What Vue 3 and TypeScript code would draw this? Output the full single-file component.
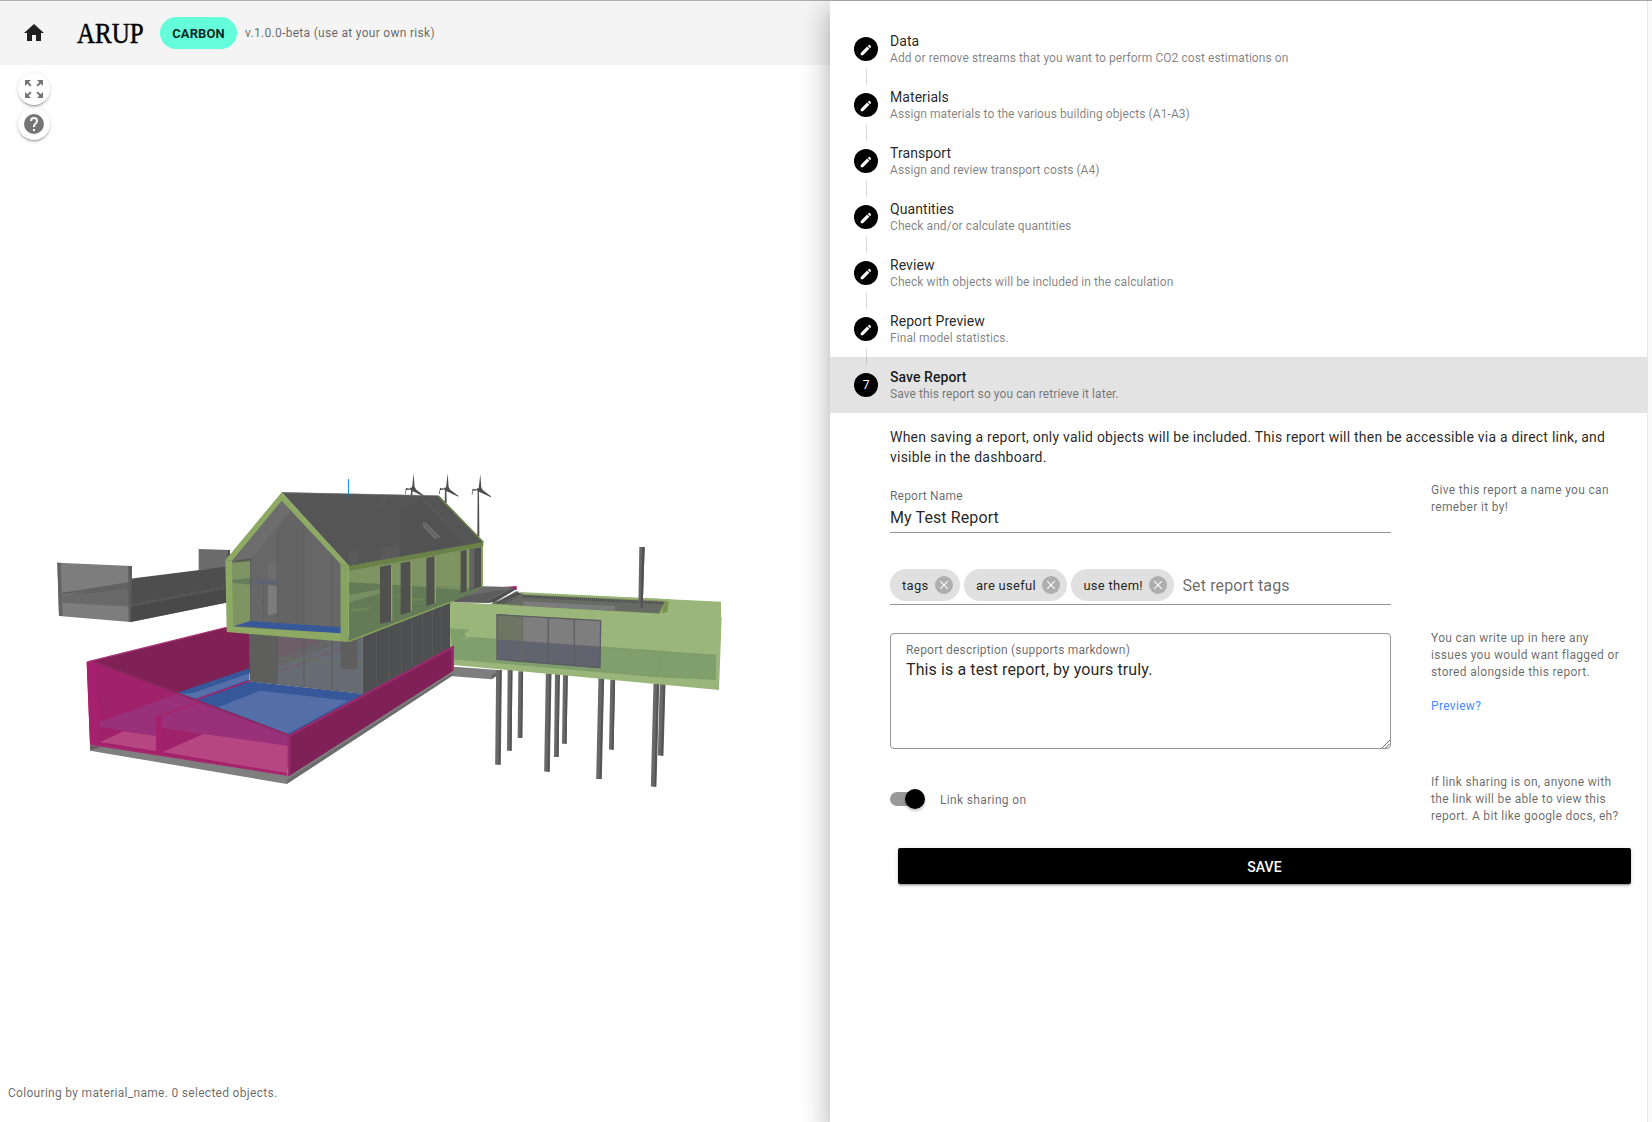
<script setup lang="ts">
import { ref } from 'vue'

interface Step {
  title: string
  hint: string
}

const steps: Step[] = [
  { title: 'Data', hint: 'Add or remove streams that you want to perform CO2 cost estimations on' },
  { title: 'Materials', hint: 'Assign materials to the various building objects (A1-A3)' },
  { title: 'Transport', hint: 'Assign and review transport costs (A4)' },
  { title: 'Quantities', hint: 'Check and/or calculate quantities' },
  { title: 'Review', hint: 'Check with objects will be included in the calculation' },
  { title: 'Report Preview', hint: 'Final model statistics.' },
  { title: 'Save Report', hint: 'Save this report so you can retrieve it later.' },
]
const current = 6

const tags = ref<string[]>(['tags', 'are useful', 'use them!'])
const reportName = ref('My Test Report')
const description = ref('This is a test report, by yours truly.')

const removeTag = (tag: string) => {
  tags.value = tags.value.filter((t) => t !== tag)
}

// Supporting columns below the wing: top x, top y, bottom x, bottom y
const columns: number[][] = [
  [242, 424, 240, 624], [210, 420, 208, 662], [177, 420, 174, 704],
  [376, 434, 373, 641], [352, 430, 349, 681], [326, 430, 321, 725],
  [518, 448, 514, 659], [484, 444, 477, 747],
  [668, 460, 662, 677], [649, 460, 641, 770],
]
const turbines: number[][] = [[611, 88], [713, 88], [811, 90]]
</script>

<template>
  <div class="app">
    <section class="viewer">
      <header class="bar">
        <svg class="home" viewBox="0 0 24 24"><path d="M10 20v-6h4v6h5v-8h3L12 3 2 12h3v8z" /></svg>
        <span class="logo"><span class="wordmark">ARUP</span></span>
        <span class="badge">CARBON</span>
        <span class="version">v.1.0.0-beta (use at your own risk)</span>
      </header>

      <div class="stage">
        <svg class="model" viewBox="0 65 830 1057">
          <!-- footbridge -->
          <g transform="translate(40 460) scale(.33333)">
            <path fill="#6b6b6b" d="M476 267 570 270V325L476 330z" />
            <path fill="#4f4f4f" d="M563 270h7v55h-7z" />
            <path fill="#7d7d7d" d="M52 308 276 318 272 486 57 468z" />
            <path fill="#626262" d="M66 398 272 366V386L66 411z" />
            <path fill="#696969" d="M66 411 272 386V440L68 428z" />
            <path fill="#7d7d7d" d="M66 404 140 396 66 409z" />
            <path fill="#636363" d="M52 308h10l6 160H57z" />
            <path fill="#4e4e4e" d="M270 356 580 317V424L272 486z" />
            <path fill="#474747" d="M272 442 580 378V424L272 486z" opacity=".7" />
            <path fill="none" stroke="#727272" stroke-width="8" stroke-dasharray="3 4" d="M140 433 272 436 556 384" opacity=".55" />
            <path fill="#5c5c5c" d="M265 318h11l-3 168h-7z" />
          </g>

          <!-- basement walls and pools, left part -->
          <g transform="translate(40 460) scale(.33333)">
            <path fill="#7f7f7f" d="M150 840 756 930 740 972 150 872z" />
            <path fill="#7f2155" d="M140 606 560 502H650V632L420 712z" />
            <path fill="none" stroke="#a83575" stroke-width="4" d="M142 606 560 502" />
            <path fill="#36589a" d="M400 702 628 625V675L480 740z" />
            <path fill="#5570a8" d="M420 702 460 698 628 640V658L470 716z" />
            <path fill="#36589a" d="M470 725 632 664 976 702V714L748 834z" />
            <path fill="#546fa8" d="M535 742 660 692 925 722 743 822z" />
            <path fill="none" stroke="#a0226a" stroke-width="5" d="M465 720 630 662" />
            <path fill="#a0226a" d="M140 606 170 607 743 822 750 830V948L150 852z" />
            <path fill="#98307a" d="M178 786 415 700 743 822V857L480 822 365 803 350 828 178 800z" />
            <path fill="#b54682" d="M180 846 252 814 350 828V874zM368 876 490 822 743 857V940z" />
            <path fill="none" stroke="#a6266d" stroke-width="6" d="M355 770 480 724" />
            <path fill="#a6216d" d="M347 770 365 762V882H348zM140 606h30l10 240-30 6z" />
            <path fill="none" stroke="#a9256f" stroke-width="6" d="M152 852 748 945" />
            <path fill="none" stroke="#8b2861" stroke-width="5" d="M165 607 743 824" />
            <path fill="#6b5c65" d="M150 855 184 861 150 871z" />
          </g>

          <!-- wing -->
          <g transform="translate(440 530) scale(.33333)">
            <path fill="#7d7d7d" d="M0 420 42 410 185 421 155 448 30 438 0 456z" />
            <path fill="#666" d="M155 434 182 424V430L155 448z" />
            <g v-for="(c, i) in columns" :key="i">
              <path :d="`M${c[0]} ${c[1]}L${c[2]} ${c[3]}`" stroke="#686868" :stroke-width="i % 3 === 2 || i > 6 ? 17 : 14" />
              <path :d="`M${c[0] + 5} ${c[1]}L${c[2] + 4} ${c[3]}`" stroke="#535353" stroke-width="5" />
            </g>
            <path fill="#80965f" d="M140 228 236 188 690 208 664 258z" />
            <path fill="#9bb67a" d="M240 186 843 215V262H845L837 480 0 401V214L660 251 680 212 245 192z" />
            <path fill="#686a64" d="M150 220 246 194 674 216 656 250z" />
            <path fill="#7c7c7c" d="M250 214 525 228V242L250 227z" />
            <path fill="none" stroke="#515151" stroke-width="8" stroke-dasharray="4 2" d="M246 199 672 219" />
            <path fill="#7b9250" d="M674 214 686 212 682 246 666 250z" />
            <path fill="#7f9f6c" d="M30 295 90 299 72 312 82 320 60 330 88 322 827 376 826 448 648 440 40 386z" />
            <path fill="none" stroke="#789565" stroke-width="2" d="M88 322 827 376 826 448 648 440 668 374M648 440 40 387" />
            <path fill="#7e7e7e" d="M171 253 482 271 480 414 171 388z" />
            <path fill="#6e7563" d="M171 253 248 258V333L171 328z" />
            <path fill="#61636f" d="M171 328 482 350 480 414 171 388z" />
            <path fill="none" stroke="#5c5d61" stroke-width="4" d="M171 254 482 272 480 413 171 388zM325 264V400M403 268V406" />
            <path fill="none" stroke="#666961" stroke-width="3" d="M248 258V393" />
            <path fill="#6b6b6b" d="M42 200 130 169 225 171 150 219 42 216z" />
            <path fill="#555" d="M42 205 180 180 200 184 148 219 42 216z" opacity=".65" />
            <path fill="#505050" d="M148 211 213 174 230 177 160 219zM165 220 228 184 248 193 190 222z" />
            <path fill="none" stroke="#777" stroke-width="2" d="M148 209 222 172M165 217 235 184M180 220 247 193" />
            <path fill="#9a2465" d="M190 171 230 168V181L208 171z" />
            <path fill="#666" d="M598 51h16l-6 183H595z" />
            <path fill="#505050" d="M607 51h7l-6 183h-6z" />
          </g>

          <!-- main house -->
          <g transform="translate(210 460) scale(.33333)">
            <g v-for="(t, i) in turbines" :key="i" fill="#4e4e4e">
              <path :d="`M${t[0] - 8} ${t[1]}h4l1 ${i === 2 ? 140 : 40}h-6z`" />
              <path :d="`M${t[0]} ${t[1] - 48}l3 44-3 8-5-8zM${t[0]} ${t[1] - 5}l32 24v3l-36-17zM${t[0]} ${t[1]}l-22 2-2 13-2-2 3-17z`" />
              <path :d="`M${t[0] - 12} ${t[1] - 4}l14-4 5 7-12 8z`" />
            </g>
            <path fill="#666669" d="M118 515 458 530V702L120 664z" />
            <path fill="#5e5e5d" d="M118 520H202V672L120 664z" />
            <path fill="#735768" d="M202 530 335 540 202 596z" opacity=".55" />
            <path fill="#686d78" d="M202 620 392 545 458 540V700L202 668z" opacity=".7" />
            <path fill="none" stroke="#765966" stroke-width="3" d="M202 635 420 555" />
            <path fill="none" stroke="#647e53" stroke-width="2" d="M202 595 458 612" />
            <path fill="#5e5e5e" d="M392 545 443 540V624Q415 632 392 622z" />
            <path fill="none" stroke="#5b5b5c" stroke-width="3" d="M202 525V670M282 530V680M367 540V690" />
            <path fill="#4d4f50" d="M458 530 720 425V572L458 708z" />
            <path fill="none" stroke="#626462" stroke-width="2" d="M499 515V678M537 498V658M574 483V638M606 470V620M637 456V602M667 444V588M694 436V572" />
            <path fill="#7f7f7f" d="M232 925 730 605V645L230 972z" />
            <path fill="#6d6d6d" d="M232 958 730 638V645L230 972z" />
            <path fill="#7f2156" d="M236 825 730 560V632L236 949z" />
            <path fill="none" stroke="#992a6b" stroke-width="7" d="M238 948V827L728 562V630" />

            <path fill="#7e9462" d="M416 328 818 256V382L728 425 416 546z" />
            <path fill="#637b57" d="M416 367 520 372 602 378 818 382 728 425 416 546z" />
            <path fill="#789061" d="M416 405 510 388V400L416 428zM605 376 750 382 752 390 605 378z" />
            <path fill="#6f8754" d="M418 448 488 441 470 452 420 455zM548 404 650 420 600 424z" />
            <path fill="#50514e" d="M510 320 543 314V485L510 491zM572 309 602 304V456L572 465zM649 294 674 289V430L649 438zM752 273 770 270V393L752 400zM779 268 813 262V380L779 390z" />
            <path fill="#646466" d="M779 270 793 267V383L779 388z" />
            <path fill="none" stroke="#89a55a" stroke-width="4" d="M545 314V482M604 304V454M676 290V428M773 270V390M817 256V380M416 544 728 424" />
            <path fill="#6a8147" d="M416 316 820 244V259L416 333z" />
            <path fill="#555" d="M215 97 685 107 820 246 416 317z" />
            <path fill="#50504f" d="M570 150 635 120 760 250 570 288z" opacity=".5" />
            <path fill="#606060" d="M513 261 567 256V288L513 297zM416 276 445 272V310L416 314z" opacity=".5" />
            <path fill="none" stroke="#66655f" stroke-width="2" d="M495 151 530 114 510 113M635 118 760 238" />
            <path fill="#6f6f6f" d="M638 186 648 188 692 232 675 238 640 200z" />
            <path fill="none" stroke="#515151" stroke-width="3" d="M642 190 684 235" />
            <path fill="none" stroke="#6a7d49" stroke-width="5" d="M685 108 819 246" />
            <path fill="none" stroke="#707070" stroke-width="2" d="M215 98 685 107" />

            <path fill="#676768" d="M215 110 60 300 62 508 400 528V312z" />
            <path fill="#7e9463" d="M66 308 120 304V486L68 500z" />
            <path fill="#647e5c" d="M66 360 120 354V374L66 368z" />
            <path fill="#6d6d6d" d="M215 122 242 154 125 295 68 305z" />
            <path fill="#565a4c" d="M75 302 125 295V300L75 307z" />
            <path fill="#646464" d="M202 205 240 155 280 195V490H202z" />
            <path fill="#5e6574" d="M122 356 214 360V376L122 370z" opacity=".8" />
            <path fill="#7c7c7c" d="M174 375 201 377V460L174 466z" />
            <path fill="#717171" d="M174 306H202V358H174z" opacity=".6" />
            <path fill="none" stroke="#5a5c59" stroke-width="2" d="M122 296V486M202 210V490M282 195V496M367 285V500M161 360V480M157 420V432" />
            <path fill="#37599a" d="M74 497 122 483 394 502V522z" />
            <path fill="#8da963" fill-rule="evenodd" d="M215 97 416 316 415 546 50 516 46 300zM215 122 66 303 70 500 392 520V312z" />
            <path fill="#86a35f" d="M392 312 416 316 415 546 393 543z" />
            <path fill="none" stroke="#799653" stroke-width="2" d="M66 303 48 300M392 312 416 317" />
            <path stroke="#1495ee" stroke-width="3" d="M415.5 57V102" />
            <path stroke="#32658a" stroke-width="2" d="M415.5 102V118" />
          </g>
        </svg>

        <div class="tools">
          <button class="tool">
            <svg viewBox="0 0 24 24"><path d="M15 3l2.3 2.3-2.89 2.87 1.42 1.42L18.7 6.7 21 9V3zM3 9l2.3-2.3 2.87 2.89 1.42-1.42L6.7 5.3 9 3H3zm6 12-2.3-2.3 2.89-2.87-1.42-1.42L5.3 17.3 3 15v6zm12-6-2.3 2.3-2.87-2.89-1.42 1.42 2.89 2.87L15 21h6z" /></svg>
          </button>
          <button class="tool">
            <svg viewBox="0 0 24 24"><path d="M15.07 11.25l-.9.92C13.45 12.89 13 13.5 13 15h-2v-.5c0-1.11.45-2.11 1.17-2.83l1.24-1.26c.37-.36.59-.86.59-1.41a2 2 0 0 0-4 0H8a4 4 0 0 1 8 0c0 .88-.36 1.67-.93 2.25M13 19h-2v-2h2M12 2a10 10 0 1 0 0 20 10 10 0 0 0 0-20z" /></svg>
          </button>
        </div>
        <p class="status">Colouring by material_name. 0 selected objects.</p>
      </div>
    </section>

    <main class="panel">
      <ol class="steps">
        <li v-for="(step, i) in steps" :key="step.title" class="step" :class="{ active: i === current }">
          <span class="dot">
            <template v-if="i === current">{{ i + 1 }}</template>
            <svg v-else viewBox="0 0 24 24"><path d="M20.71 7.04c.39-.39.39-1.04 0-1.41l-2.34-2.34c-.37-.39-1.02-.39-1.41 0l-1.84 1.83 3.75 3.75M3 17.25V21h3.75L17.81 9.93l-3.75-3.75z" /></svg>
          </span>
          <span class="label">
            <span class="title">{{ step.title }}</span>
            <small>{{ step.hint }}</small>
          </span>
        </li>
      </ol>

      <div class="content">
        <p class="intro">When saving a report, only valid objects will be included. This report will then be accessible via a direct link, and visible in the dashboard.</p>

        <div class="row row-name">
          <div class="field">
            <span class="caption">Report Name</span>
            <span class="value">{{ reportName }}</span>
          </div>
          <p class="help">Give this report a name you can remeber it by!</p>
        </div>

        <div class="row row-tags">
          <div class="tag-field">
            <span v-for="tag in tags" :key="tag" class="chip">
              {{ tag }}
              <svg viewBox="0 0 18 18" @click="removeTag(tag)"><circle cx="9" cy="9" r="9" /><path d="M5.2 5.2l7.6 7.6M12.8 5.2l-7.6 7.6" /></svg>
            </span>
            <span class="placeholder">Set report tags</span>
          </div>
        </div>

        <div class="row row-text">
          <div class="area">
            <span class="caption">Report description (supports markdown)</span>
            <span class="value">{{ description }}</span>
            <svg class="grip" viewBox="0 0 9 9"><path d="M0 9 9 0M4 9 9 4" /></svg>
          </div>
          <div class="help">
            <p>You can write up in here any issues you would want flagged or stored alongside this report.</p>
            <a class="preview">Preview?</a>
          </div>
        </div>

        <div class="row row-share">
          <div class="share">
            <span class="switch"><span class="thumb"></span></span>
            <span class="share-label">Link sharing on</span>
          </div>
          <p class="help">If link sharing is on, anyone with the link will be able to view this report. A bit like google docs, eh?</p>
        </div>

        <button class="save">SAVE</button>
      </div>
    </main>
    <div class="gutter"></div>
  </div>
</template>

<style>
body {
  margin: 0;
  overflow: hidden;
}
</style>

<style scoped>
.app {
  display: flex;
  box-sizing: border-box;
  width: 1652px;
  height: 1122px;
  border-top: 1px solid #b0b0b0;
  background: #fff;
  color: rgba(0, 0, 0, 0.87);
  font-family: Roboto, sans-serif;
  font-size: 14px;
}
p, ol { margin: 0; padding: 0; }
button { border: 0; padding: 0; font: inherit; }
.viewer { width: 830px; display: flex; flex-direction: column; }
.bar {
  height: 64px;
  background: #f4f4f4;
  display: flex;
  align-items: center;
}
.home { width: 24px; height: 24px; margin-left: 22px; fill: #212121; }
.logo { width: 66px; height: 36px; margin-left: 31px; }
.wordmark {
  display: block;
  width: 80px;
  font: 29px/36px "Liberation Serif", serif;
  color: #000;
  -webkit-text-stroke: 0.5px #000;
  transform: scaleX(0.86);
  transform-origin: 0 50%;
}
.badge {
  box-sizing: border-box;
  width: 77px;
  height: 32px;
  margin-left: 17px;
  border-radius: 16px;
  background: #64ffda;
  line-height: 33px;
  text-align: center;
  font-size: 13px;
  letter-spacing: 0.1px;
  font-weight: 700;
}
.version, .status { font-size: 12px; letter-spacing: 0.3px; color: rgba(0, 0, 0, 0.6); }
.version { margin-left: 8px; }
.stage { position: relative; height: 1057px; }
.model { display: block; width: 830px; height: 1057px; }
.tools { position: absolute; left: 18px; top: 8px; display: flex; flex-direction: column; gap: 3px; }
.tool {
  width: 32px;
  height: 32px;
  border-radius: 50%;
  background: #fff;
  display: flex;
  align-items: center;
  justify-content: center;
  box-shadow: 0 3px 1px -2px rgba(0, 0, 0, 0.2), 0 2px 2px 0 rgba(0, 0, 0, 0.14), 0 1px 5px 0 rgba(0, 0, 0, 0.12);
}
.tool svg { width: 24px; height: 24px; fill: #757575; }
.status { position: absolute; left: 8px; top: 1018px; line-height: 20px; }
.panel {
  position: relative;
  box-sizing: border-box;
  width: 817px;
  padding-top: 20px;
  background: #fff;
  box-shadow: 0 8px 10px -5px rgba(0, 0, 0, 0.2), 0 16px 24px 2px rgba(0, 0, 0, 0.14), 0 6px 30px 5px rgba(0, 0, 0, 0.12);
}
.gutter { position: relative; box-sizing: border-box; width: 5px; background: #fafafa; border-left: 1px solid #e7e7e7; }
.steps { list-style: none; }
.step { position: relative; display: flex; align-items: center; height: 56px; padding-left: 24px; }
.step.active { background: #e3e3e3; }
.step:not(.active)::after {
  content: "";
  position: absolute;
  z-index: 1;
  left: 36px;
  top: 48px;
  width: 1px;
  height: 16px;
  background: rgba(0, 0, 0, 0.15);
}
.dot {
  width: 24px;
  height: 24px;
  margin-right: 12px;
  border-radius: 50%;
  background: #000;
  color: #fff;
  font-size: 12px;
  display: flex;
  align-items: center;
  justify-content: center;
}
.active .dot { line-height: 26px; }
.dot svg { width: 14px; height: 14px; fill: #fff; margin-top: 2px; }
.label { display: flex; flex-direction: column; }
.title { line-height: 17px; letter-spacing: 0.07px; }
.label small { font-size: 12px; line-height: 16px; letter-spacing: 0.07px; color: rgba(0, 0, 0, 0.5); }
.active .title { font-weight: 500; color: rgba(0, 0, 0, 0.9); }
.content { padding: 14px 16px 0 60px; }
.intro { line-height: 20px; letter-spacing: 0.23px; }
.row { display: grid; grid-template-columns: 501px 192px; column-gap: 40px; align-items: start; }
.row-name { margin-top: 14px; height: 88px; }
.row-tags { height: 60px; }
.row-text { height: 144px; }
.row-share { height: 75px; }
.help { padding-top: 1px; font-size: 12px; line-height: 17px; letter-spacing: 0.32px; color: rgba(0, 0, 0, 0.6); }
.preview { display: block; margin-top: 17px; color: #448aff; }
.caption { font-size: 12px; line-height: 18px; letter-spacing: 0.2px; color: rgba(0, 0, 0, 0.6); }
.value { font-size: 16px; line-height: 22px; letter-spacing: 0.11px; }
.field { display: flex; flex-direction: column; height: 45px; padding-top: 6px; border-bottom: 1px solid #949494; }
.field .value { margin-top: 2px; }
.tag-field { display: flex; gap: 4px; height: 35px; border-bottom: 1px solid #949494; }
.chip {
  display: flex;
  align-items: center;
  gap: 6.5px;
  height: 32px;
  padding: 0 7px 0 12px;
  box-sizing: border-box;
  border-radius: 16px;
  background: #e0e0e0;
  font-size: 13px;
  letter-spacing: 0.28px;
}
.chip svg { width: 18px; height: 18px; }
.chip circle { fill: #aeaeae; }
.chip path { stroke: #fff; stroke-width: 1.1; fill: none; }
.placeholder { margin-left: 4px; font-size: 16px; line-height: 33px; letter-spacing: 0.13px; color: rgba(0, 0, 0, 0.6); }
.area {
  position: relative;
  box-sizing: border-box;
  display: flex;
  flex-direction: column;
  height: 116px;
  margin-top: 4px;
  padding: 7px 15px;
  border: 1px solid #949494;
  border-radius: 4px;
}
.grip { position: absolute; right: 0; bottom: 0; width: 8px; height: 8px; stroke: #555; stroke-width: 1; fill: none; }
.share { display: flex; align-items: center; gap: 15px; margin-top: 16px; font-size: 12px; letter-spacing: 0.35px; color: rgba(0, 0, 0, 0.6); }
.share-label { padding-top: 2px; }
.switch { position: relative; width: 35px; height: 20px; display: flex; justify-content: flex-end; }
.switch::before {
  content: "";
  position: absolute;
  left: 0;
  top: 3px;
  width: 28px;
  height: 14px;
  border-radius: 7px;
  background: #999;
}
.thumb { position: relative; width: 20px; height: 20px; border-radius: 50%; background: #000; box-shadow: 0 2px 3px rgba(0, 0, 0, 0.25); }
.save {
  display: block;
  width: 733px;
  height: 36px;
  margin-left: 8px;
  padding-top: 2px;
  border-radius: 2px;
  background: #000;
  color: #fff;
  font-size: 14px;
  font-weight: 500;
  letter-spacing: 0.15px;
  box-shadow: 0 3px 1px -2px rgba(0, 0, 0, 0.2), 0 2px 2px 0 rgba(0, 0, 0, 0.14), 0 1px 5px 0 rgba(0, 0, 0, 0.12);
}
</style>
